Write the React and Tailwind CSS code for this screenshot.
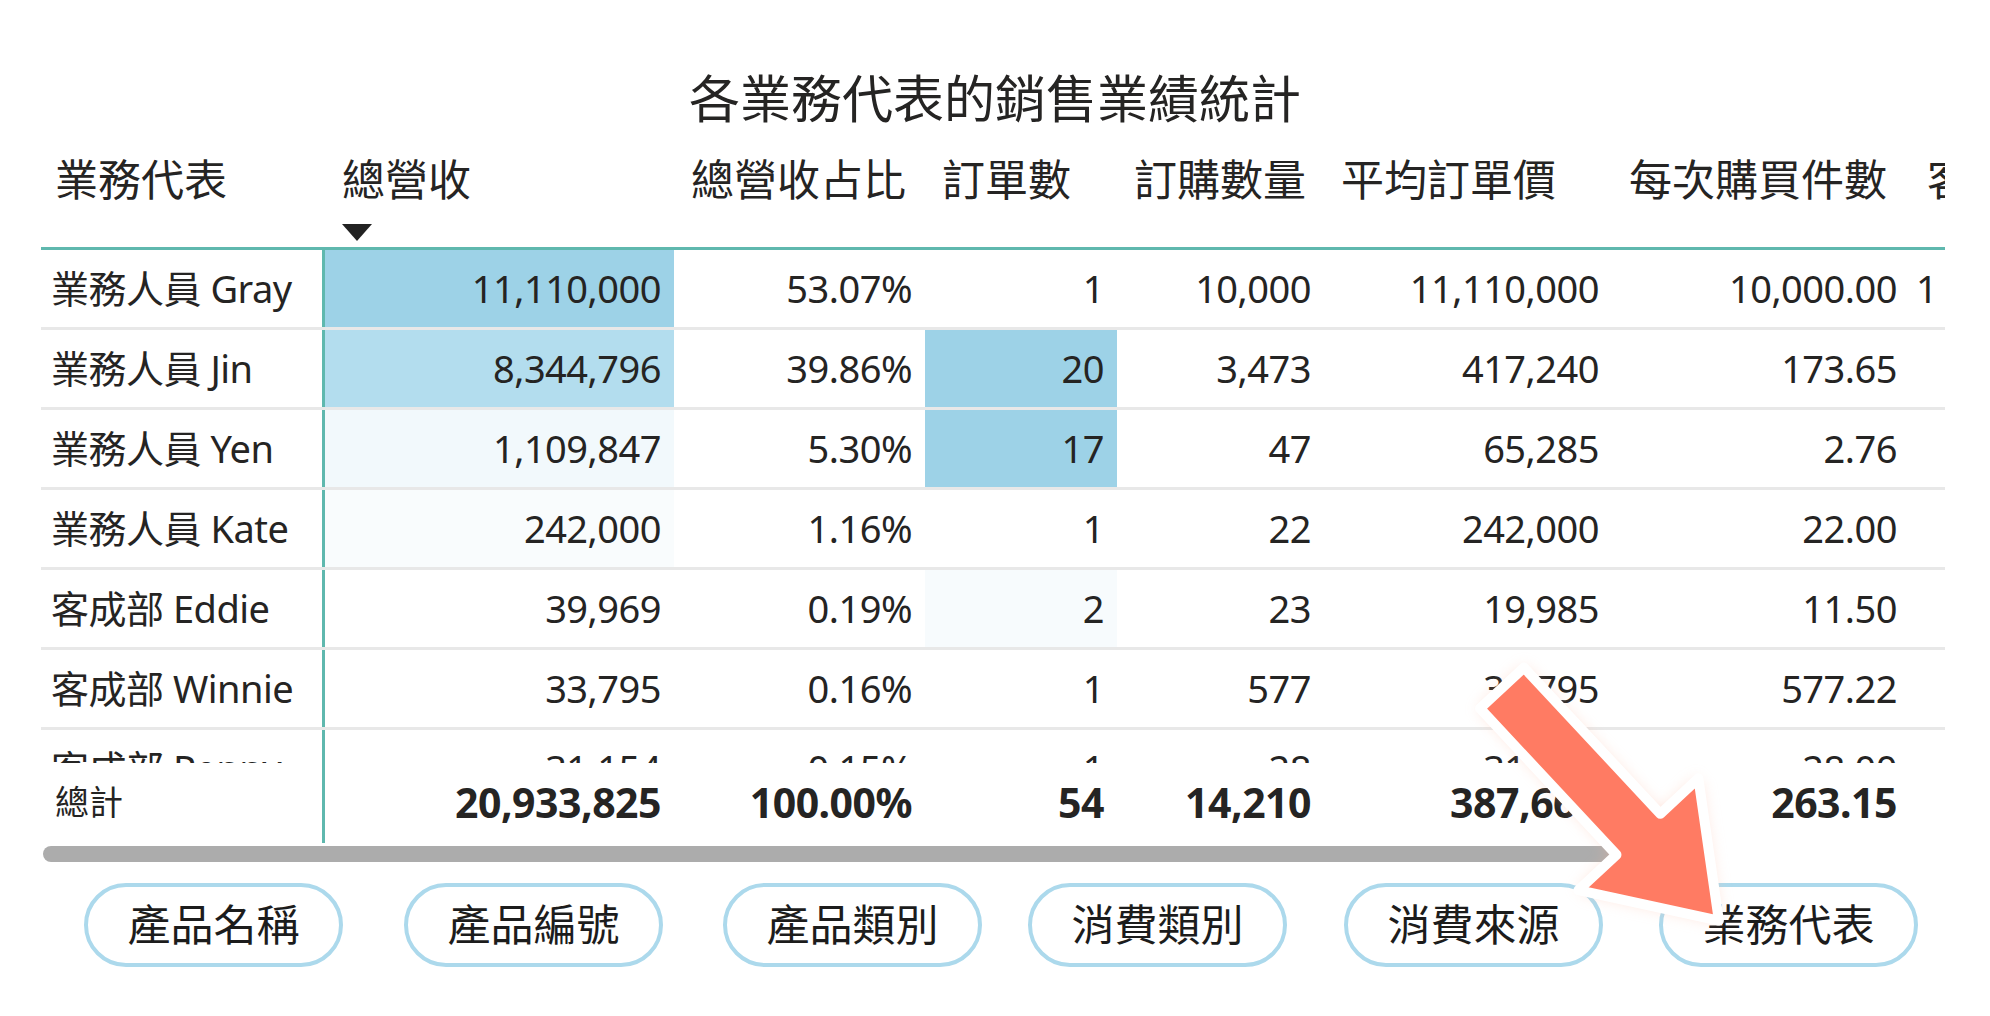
const F = { fontFamily: '"Noto Sans","Noto Sans CJK TC",sans-serif' };
const cols = [284, 349, 251, 192, 207, 288, 298, 80];
const rows = [
  ["業務人員 Gray", "11,110,000", "53.07%", "1", "10,000", "11,110,000", "10,000.00", "1", "bg-[#9dd2e7]", ""],
  ["業務人員 Jin", "8,344,796", "39.86%", "20", "3,473", "417,240", "173.65", "", "bg-[#b3ddee]", "bg-[#9dd2e7]"],
  ["業務人員 Yen", "1,109,847", "5.30%", "17", "47", "65,285", "2.76", "", "bg-[#f2f9fc]", "bg-[#9dd2e7]"],
  ["業務人員 Kate", "242,000", "1.16%", "1", "22", "242,000", "22.00", "", "bg-[#f9fcfd]", ""],
  ["客成部 Eddie", "39,969", "0.19%", "2", "23", "19,985", "11.50", "", "", "bg-[#f7fbfd]"],
  ["客成部 Winnie", "33,795", "0.16%", "1", "577", "33,795", "577.22", "", "", ""],
  ["客成部 Penny", "31,154", "0.15%", "1", "28", "31,154", "28.00", "", "", ""],
];
const heads = ["業務代表", "總營收", "總營收占比", "訂單數", "訂購數量", "平均訂單價", "每次購買件數", "客單價"];
const totals = ["總計", "20,933,825", "100.00%", "54", "14,210", "387,663", "263.15", ""];
const btns = ["產品名稱", "產品編號", "產品類別", "消費類別", "消費來源", "業務代表"];
const btnX = [84, 404, 723, 1028, 1344, 1659];

export default function App() {
  return (
    <div style={F} className="relative w-[1990px] h-[1016px] bg-white text-[#252423] overflow-hidden">
      <div className="pt-[68px] text-center text-[51px] leading-[60px]">各業務代表的銷售業績統計</div>
      <div className="ml-[41px] w-[1904px] overflow-hidden">
        <div className="flex h-[122px] border-b-[3px] border-[#5fb8ae] w-[1949px]">
          {heads.map((h, i) => (
            <div key={i} style={{ width: cols[i] }} className={`shrink-0 pt-[22px] text-[43px] leading-[60px] whitespace-nowrap overflow-hidden ${i === 0 ? "pl-[14px]" : "pl-[17px]"} relative`}>
              {h}
              {i === 1 && <div className="absolute left-[17px] top-[96px] w-0 h-0 border-l-[15px] border-r-[15px] border-t-[17px] border-l-transparent border-r-transparent border-t-[#222]" />}
            </div>
          ))}
        </div>
        <div className="h-[513px] overflow-hidden">
          {rows.map((r, ri) => (
            <div key={ri} className="flex h-[80px] w-[1949px] border-b-[3px] border-[#e8e8e8]">
              {cols.map((w, ci) => (
                <div key={ci} style={{ width: w }}
                  className={`shrink-0 h-full flex items-center text-[38px] tracking-[-0.5px] whitespace-nowrap overflow-hidden ${ci === 0 ? "pl-[10px] border-r-[3px] border-[#5fb8ae]" : "justify-end pr-[13px]"} ${ci === 1 ? r[8] : ""} ${ci === 3 ? r[9] : ""} ${ci === 7 ? "justify-start pl-[6px]" : ""}`}>
                  {r[ci]}
                </div>
              ))}
            </div>
          ))}
        </div>
        <div className="flex h-[80px] w-[1949px]">
          {cols.map((w, ci) => (
            <div key={ci} style={{ width: w }}
              className={`shrink-0 h-full whitespace-nowrap ${ci === 0 ? "pl-[14px] text-[34px] pt-[14px] border-r-[3px] border-[#5fb8ae]" : "flex items-center justify-end pr-[13px] text-[41px] font-bold tracking-[-0.5px]"}`}>
              {totals[ci]}
            </div>
          ))}
        </div>
      </div>
      <div className="ml-[43px] mt-[3px] w-[1667px] h-[16px] rounded-full bg-[#acacac]" />
      <div className="relative h-[120px]">
        {btns.map((b, i) => (
          <div key={i} style={{ left: btnX[i] }} className="absolute top-[21px] w-[259px] h-[84px] rounded-full border-[4px] border-[#acd9ec] flex items-center justify-center text-[43px] text-[#1c1c1c]">{b}</div>
        ))}
      </div>
      <svg className="absolute left-[1440px] top-[640px]" width="320" height="320" viewBox="0 0 320 320">
        <defs>
          <filter id="g" x="-30%" y="-30%" width="160%" height="160%"><feGaussianBlur stdDeviation="8" /></filter>
        </defs>
        <g transform="translate(62,48) rotate(47)">
          <polygon points="0,-30 200,-30 200,-82 318,0 200,82 200,30 0,30" fill="#ffb59c" opacity="0.5" filter="url(#g)" />
          <polygon points="0,-30 200,-30 200,-82 318,0 200,82 200,30 0,30" fill="#ff7b63" stroke="white" strokeWidth="10" strokeLinejoin="round" />
        </g>
      </svg>
    </div>
  );
}
